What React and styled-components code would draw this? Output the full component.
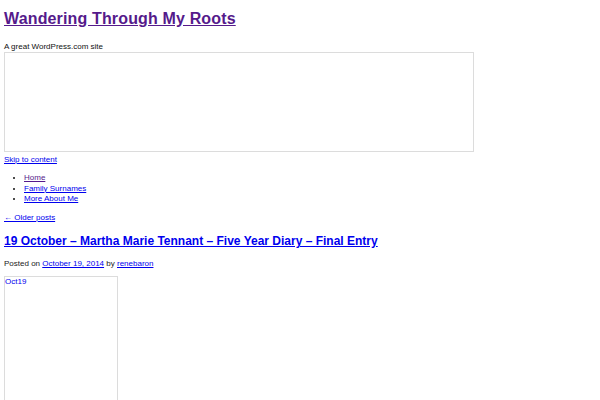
import React from 'react'
import styled, { createGlobalStyle } from 'styled-components'

const GlobalStyle = createGlobalStyle`
  html, body {
    margin: 0;
    background: #fff;
  }
  body {
    padding: 4px;
    font-family: 'Liberation Sans', Arial, sans-serif;
    font-size: 8px;
    line-height: 10px;
    color: #111;
  }
`

const Link = styled.a`
  color: ${p => (p.$visited ? '#551a8b' : '#0000ee')};
  text-decoration: ${p => (p.$plain ? 'none' : 'underline')};
  cursor: pointer;
`

const SiteTitle = styled.h1`
  margin: 6px 0 13.5px;
  font-size: 16px;
  line-height: 18.5px;
  font-weight: bold;
  letter-spacing: 0.15px;
`

const Tagline = styled.div`
  line-height: 10px;
`

const HeaderFrame = styled.div`
  width: 468px;
  height: 98px;
  border: 1px solid #dcdcdc;
`

const SkipLink = styled.div`
  margin-top: 2.5px;
  line-height: 10px;
`

const Menu = styled.ul`
  margin: 8.5px 0 0;
  padding-left: 20px;
  line-height: 10.5px;
  list-style: disc;
`

const NavBelow = styled.div`
  margin-top: 8px;
  line-height: 10.5px;
`

const EntryTitle = styled.h2`
  margin: 11px 0 0;
  font-size: 12px;
  line-height: 14px;
  font-weight: bold;
`

const EntryMeta = styled.div`
  margin-top: 11px;
  line-height: 10px;
  color: #222;
`

const Thumb = styled.div`
  margin-top: 7px;
  width: 112px;
  height: 140px;
  border: 1px solid #dcdcdc;
  line-height: 9px;
`

export default function App() {
  return (
    <>
      <GlobalStyle />
      <header>
        <SiteTitle>
          <Link $visited>Wandering Through My Roots</Link>
        </SiteTitle>
        <Tagline>A great WordPress.com site</Tagline>
        <HeaderFrame />
        <SkipLink>
          <Link>Skip to content</Link>
        </SkipLink>
        <Menu>
          <li><Link $visited>Home</Link></li>
          <li><Link>Family Surnames</Link></li>
          <li><Link>More About Me</Link></li>
        </Menu>
      </header>
      <NavBelow>
        <Link>← Older posts</Link>
      </NavBelow>
      <article>
        <EntryTitle>
          <Link>19 October – Martha Marie Tennant – Five Year Diary – Final Entry</Link>
        </EntryTitle>
        <EntryMeta>
          Posted on <Link>October 19, 2014</Link> by <Link>renebaron</Link>
        </EntryMeta>
        <Thumb>
          <Link $plain>Oct19</Link>
        </Thumb>
      </article>
    </>
  )
}
